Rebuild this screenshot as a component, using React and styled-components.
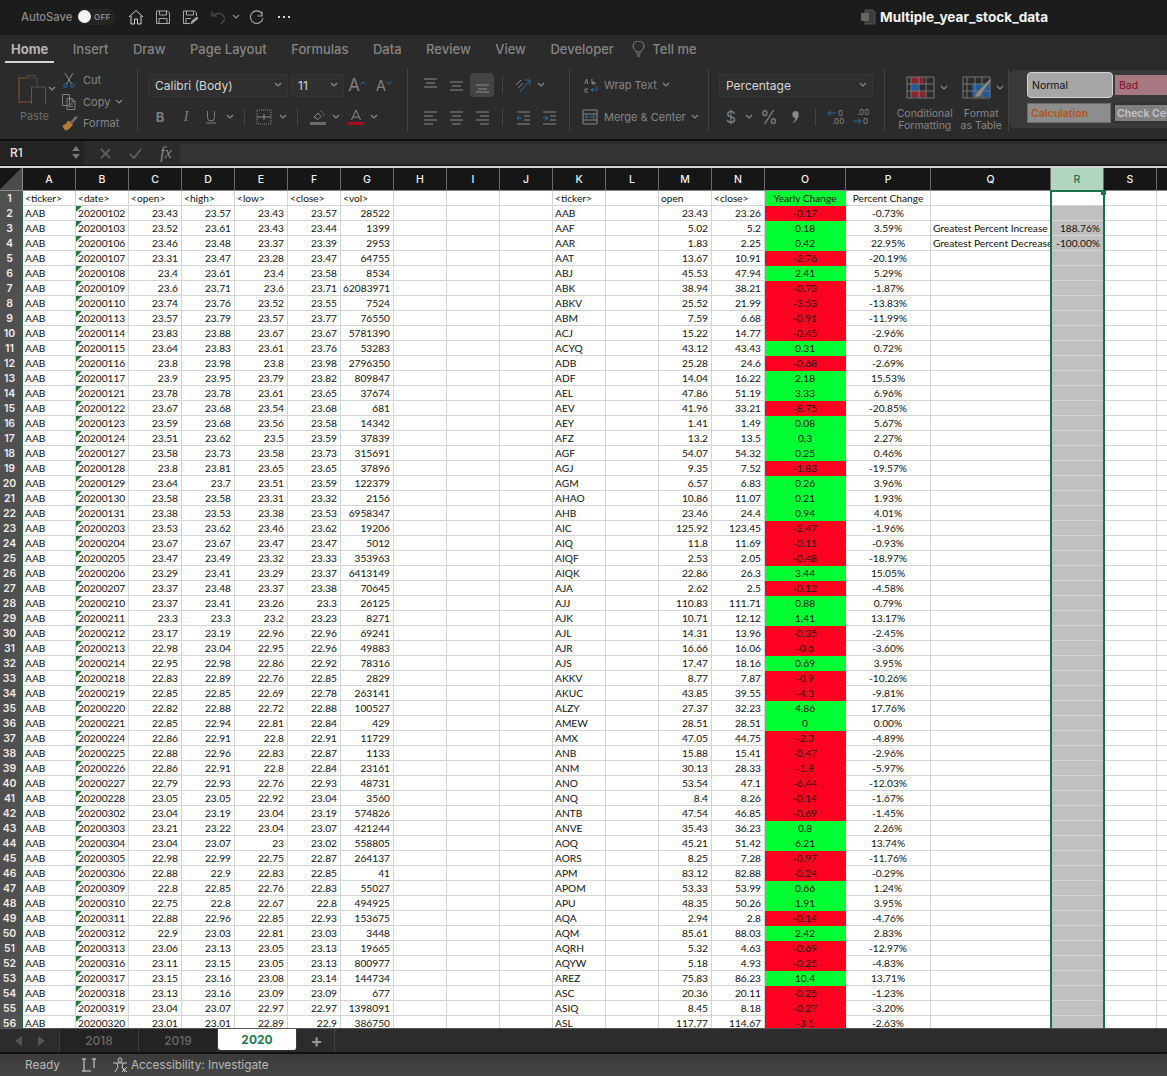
import React from 'react';
import styled, { createGlobalStyle } from 'styled-components';

const GlobalStyle = createGlobalStyle`
    html, body { margin: 0; padding: 0; background: #1c1c1c; }
    * { box-sizing: border-box; }
`;

const DATES = '20200102 20200103 20200106 20200107 20200108 20200109 20200110 20200113 20200114 20200115 20200116 20200117 20200121 20200122 20200123 20200124 20200127 20200128 20200129 20200130 20200131 20200203 20200204 20200205 20200206 20200207 20200210 20200211 20200212 20200213 20200214 20200218 20200219 20200220 20200221 20200224 20200225 20200226 20200227 20200228 20200302 20200303 20200304 20200305 20200306 20200309 20200310 20200311 20200312 20200313 20200316 20200317 20200318 20200319 20200320'.split(' ');

const PRICES = `23.43 23.57 23.43 23.57 28522
23.52 23.61 23.43 23.44 1399
23.46 23.48 23.37 23.39 2953
23.31 23.47 23.28 23.47 64755
23.4 23.61 23.4 23.58 8534
23.6 23.71 23.6 23.71 62083971
23.74 23.76 23.52 23.55 7524
23.57 23.79 23.57 23.77 76550
23.83 23.88 23.67 23.67 5781390
23.64 23.83 23.61 23.76 53283
23.8 23.98 23.8 23.98 2796350
23.9 23.95 23.79 23.82 809847
23.78 23.78 23.61 23.65 37674
23.67 23.68 23.54 23.68 681
23.59 23.68 23.56 23.58 14342
23.51 23.62 23.5 23.59 37839
23.58 23.73 23.58 23.73 315691
23.8 23.81 23.65 23.65 37896
23.64 23.7 23.51 23.59 122379
23.58 23.58 23.31 23.32 2156
23.38 23.53 23.38 23.53 6958347
23.53 23.62 23.46 23.62 19206
23.67 23.67 23.47 23.47 5012
23.47 23.49 23.32 23.33 353963
23.29 23.41 23.29 23.37 6413149
23.37 23.48 23.37 23.38 70645
23.37 23.41 23.26 23.3 26125
23.3 23.3 23.2 23.23 8271
23.17 23.19 22.96 22.96 69241
22.98 23.04 22.95 22.96 49883
22.95 22.98 22.86 22.92 78316
22.83 22.89 22.76 22.85 2829
22.85 22.85 22.69 22.78 263141
22.82 22.88 22.72 22.88 100527
22.85 22.94 22.81 22.84 429
22.86 22.91 22.8 22.91 11729
22.88 22.96 22.83 22.87 1133
22.86 22.91 22.8 22.84 23161
22.79 22.93 22.76 22.93 48731
23.05 23.05 22.92 23.04 3560
23.04 23.19 23.04 23.19 574826
23.21 23.22 23.04 23.07 421244
23.04 23.07 23 23.02 558805
22.98 22.99 22.75 22.87 264137
22.88 22.9 22.83 22.85 41
22.8 22.85 22.76 22.83 55027
22.75 22.8 22.67 22.8 494925
22.88 22.96 22.85 22.93 153675
22.9 23.03 22.81 23.03 3448
23.06 23.13 23.05 23.13 19665
23.11 23.15 23.05 23.13 800977
23.15 23.16 23.08 23.14 144734
23.13 23.16 23.09 23.09 677
23.04 23.07 22.97 22.97 1398091
23.01 23.01 22.89 22.9 386750`.split('\n').map((line) => line.split(' '));

const SUMMARY = `AAB 23.43 23.26 -0.17 -0.73%
AAF 5.02 5.2 0.18 3.59%
AAR 1.83 2.25 0.42 22.95%
AAT 13.67 10.91 -2.76 -20.19%
ABJ 45.53 47.94 2.41 5.29%
ABK 38.94 38.21 -0.73 -1.87%
ABKV 25.52 21.99 -3.53 -13.83%
ABM 7.59 6.68 -0.91 -11.99%
ACJ 15.22 14.77 -0.45 -2.96%
ACYQ 43.12 43.43 0.31 0.72%
ADB 25.28 24.6 -0.68 -2.69%
ADF 14.04 16.22 2.18 15.53%
AEL 47.86 51.19 3.33 6.96%
AEV 41.96 33.21 -8.75 -20.85%
AEY 1.41 1.49 0.08 5.67%
AFZ 13.2 13.5 0.3 2.27%
AGF 54.07 54.32 0.25 0.46%
AGJ 9.35 7.52 -1.83 -19.57%
AGM 6.57 6.83 0.26 3.96%
AHAO 10.86 11.07 0.21 1.93%
AHB 23.46 24.4 0.94 4.01%
AIC 125.92 123.45 -2.47 -1.96%
AIQ 11.8 11.69 -0.11 -0.93%
AIQF 2.53 2.05 -0.48 -18.97%
AIQK 22.86 26.3 3.44 15.05%
AJA 2.62 2.5 -0.12 -4.58%
AJJ 110.83 111.71 0.88 0.79%
AJK 10.71 12.12 1.41 13.17%
AJL 14.31 13.96 -0.35 -2.45%
AJR 16.66 16.06 -0.6 -3.60%
AJS 17.47 18.16 0.69 3.95%
AKKV 8.77 7.87 -0.9 -10.26%
AKUC 43.85 39.55 -4.3 -9.81%
ALZY 27.37 32.23 4.86 17.76%
AMEW 28.51 28.51 0 0.00%
AMX 47.05 44.75 -2.3 -4.89%
ANB 15.88 15.41 -0.47 -2.96%
ANM 30.13 28.33 -1.8 -5.97%
ANO 53.54 47.1 -6.44 -12.03%
ANQ 8.4 8.26 -0.14 -1.67%
ANTB 47.54 46.85 -0.69 -1.45%
ANVE 35.43 36.23 0.8 2.26%
AOQ 45.21 51.42 6.21 13.74%
AORS 8.25 7.28 -0.97 -11.76%
APM 83.12 82.88 -0.24 -0.29%
APOM 53.33 53.99 0.66 1.24%
APU 48.35 50.26 1.91 3.95%
AQA 2.94 2.8 -0.14 -4.76%
AQM 85.61 88.03 2.42 2.83%
AQRH 5.32 4.63 -0.69 -12.97%
AQYW 5.18 4.93 -0.25 -4.83%
AREZ 75.83 86.23 10.4 13.71%
ASC 20.36 20.11 -0.25 -1.23%
ASIQ 8.45 8.18 -0.27 -3.20%
ASL 117.77 114.67 -3.1 -2.63%`.split('\n').map((line) => line.split(' '));

const COLUMNS = 'ABCDEFGHIJKLMNOPQRST'.split('');
const HEAD_ROW = {
    A: '<ticker>', B: '<date>', C: '<open>', D: '<high>', E: '<low>', F: '<close>', G: '<vol>',
    K: '<ticker>', M: 'open', N: '<close>', O: 'Yearly Change', P: 'Percent Change',
};
const UI_FONT = `Inter, "Liberation Sans", sans-serif`;
const GREEN = '#1d6f48';

const Page = styled.div`
    width: 1167px;
    height: 1076px;
    display: flex;
    flex-direction: column;
    overflow: hidden;
    font-family: ${UI_FONT};
    background: #2b2b2b;
`;

/* title bar */
const TitleBar = styled.div`
    height: 35px;
    flex: none;
    display: flex;
    align-items: center;
    padding: 0 0 2px 21px;
    background: #1c1c1c;
`;
const AutoSave = styled.span`
    width: 56px;
    font-size: 11.2px;
    font-weight: 500;
    color: #8c8c8c;
`;
const Toggle = styled.span`
    width: 39px;
    height: 16px;
    border-radius: 8px;
    background: #242424;
    display: flex;
    align-items: center;
    gap: 3px;
    margin-right: 6.5px;
    padding-left: 1px;
    font-size: 8px;
    font-weight: 600;
    letter-spacing: 0.3px;
    color: #8c8c8c;
    &::before {
        content: '';
        width: 13px;
        height: 13px;
        border-radius: 50%;
        background: #f2f2f2;
    }
`;
const Quick = styled.span`
    width: ${(p) => p.$w}px;
    display: flex;
    justify-content: center;
    align-items: center;
    flex: none;
`;
const DocTitle = styled.div`
    margin-left: auto;
    width: 307px;
    display: flex;
    align-items: center;
    gap: 4px;
    font-size: 13.6px;
    font-weight: 700;
    color: #f4f4f4;
`;

/* ribbon tabs */
const TabsBar = styled.div`
    height: 31px;
    flex: none;
    display: flex;
    align-items: center;
    gap: 24.5px;
    padding: 0 0 3px 11px;
    background: #2b2b2b;
`;
const RibbonTab = styled.span`
    position: relative;
    display: flex;
    align-items: center;
    gap: 7px;
    margin-left: ${(p) => p.$shift || 0}px;
    font-size: 13px;
    font-weight: ${(p) => (p.$active ? 700 : 500)};
    color: ${(p) => (p.$active ? '#b4b4b4' : '#858585')};
    ${(p) => p.$active && `
        &::after {
            content: '';
            position: absolute;
            left: -6px;
            right: -6px;
            bottom: -6px;
            height: 2px;
            background: #d4d4d4;
        }
    `}
`;

/* ribbon */
const Ribbon = styled.div`
    height: 73px;
    flex: none;
    display: flex;
    padding-top: 3px;
    background: #2b2b2b;
    overflow: hidden;
`;
const Group = styled.div`
    width: ${(p) => p.$w}px;
    height: 62px;
    flex: none;
    display: flex;
    flex-direction: ${(p) => (p.$row ? 'row' : 'column')};
    gap: ${(p) => (p.$row ? 0 : 8)}px;
    padding: ${(p) => (p.$row ? '0' : '4px 0 0')};
    padding-left: ${(p) => p.$pad || 0}px;
    border-right: 1px solid #444;
`;
const ToolRow = styled.div`
    height: 24px;
    display: flex;
    align-items: center;
`;
const Slot = styled.span`
    width: ${(p) => p.$w}px;
    height: 24px;
    flex: none;
    display: flex;
    align-items: center;
    justify-content: center;
    border-radius: 4px;
    font-family: ${(p) => (p.$serif ? '"Liberation Serif", serif' : UI_FONT)};
    font-size: ${(p) => p.$size || 14}px;
    font-weight: ${(p) => p.$weight || 400};
    font-style: ${(p) => (p.$italic ? 'italic' : 'normal')};
    color: #7f7f7f;
    background: ${(p) => (p.$active ? '#444' : 'transparent')};
`;
const Divider = styled.span`
    width: 1px;
    height: 18px;
    background: #444;
`;
const Select = styled.div`
    width: ${(p) => p.$w}px;
    height: 23px;
    flex: none;
    margin-right: ${(p) => p.$gap || 0}px;
    padding: 0 5px 0 6px;
    display: flex;
    align-items: center;
    justify-content: space-between;
    font-size: 12px;
    color: #d6d6d6;
    background: #2f2f2f;
    border: 1px solid #363636;
    border-radius: 3px;
`;
const ClipLabel = styled.span`
    padding-left: 3px;
    font-size: 11px;
    color: #6d6d6d;
`;
const PasteColumn = styled.div`
    width: 60px;
    padding: 5px 0 0 17px;
    display: flex;
    flex-direction: column;
    gap: 5px;
`;
const PasteTop = styled.div`
    display: flex;
    align-items: center;
    gap: 2px;
`;
const ClipList = styled.div`
    display: flex;
    flex-direction: column;
    padding-top: 3px;
    gap: 4px;
`;
const ClipRow = styled.div`
    height: 18px;
    display: flex;
    align-items: center;
    gap: 5px;
    font-size: 11px;
    color: #868686;
`;
const ClipIcon = styled.span`
    width: 18px;
    display: flex;
    justify-content: center;
`;
const TextTool = styled.span`
    margin-left: 2px;
    margin-right: 5px;
    font-size: 11px;
    color: #868686;
`;
const StyleColumn = styled.div`
    width: ${(p) => p.$w}px;
    display: flex;
    flex-direction: column;
    padding-top: 7px;
    gap: 9px;
`;
const StyleIconRow = styled.div`
    height: 23px;
    display: flex;
    align-items: center;
    gap: ${(p) => p.$gap}px;
    padding-left: ${(p) => p.$pad}px;
`;
const StyleLabel = styled.div`
    font-size: 10.5px;
    line-height: 12px;
    text-align: center;
    color: #868686;
`;
const StyleBox = styled.div`
    flex: 1;
    height: 58px;
    margin-top: 1px;
    padding: 2px 0 0 18px;
    display: flex;
    flex-direction: column;
    gap: 5px;
    background: #3a3a3a;
    border-radius: 6px 0 0 6px;
`;
const StyleLine = styled.div`
    display: flex;
    align-items: center;
    height: ${(p) => p.$h}px;
    gap: 2px;
`;
const StyleChip = styled.span`
    width: ${(p) => p.$w}px;
    height: ${(p) => p.$h}px;
    flex: none;
    display: flex;
    align-items: center;
    padding-left: ${(p) => p.$pad || 4}px;
    font-size: 10.5px;
    font-weight: ${(p) => p.$weight || 400};
    color: ${(p) => p.$color};
    background: ${(p) => p.$bg};
    border: ${(p) => p.$border || 'none'};
    border-radius: ${(p) => p.$radius || 0}px;
    overflow: hidden;
    white-space: nowrap;
`;

/* formula bar */
const FormulaBar = styled.div`
    height: 27px;
    flex: none;
    display: flex;
    align-items: stretch;
    background: #2b2b2b;
    border-top: 2px solid #0c0c0c;
    border-bottom: 1px solid #111;
`;
const NameBox = styled.div`
    width: 84px;
    flex: none;
    padding: 0 4px 2px 10px;
    display: flex;
    align-items: center;
    justify-content: space-between;
    font-size: 12px;
    font-weight: 500;
    color: #e4e4e4;
    background: #232323;
`;
const Stepper = styled.span`
    display: flex;
    flex-direction: column;
    gap: 3px;
`;
const FormulaTools = styled.div`
    width: 96px;
    flex: none;
    display: flex;
    align-items: center;
`;
const FxLabel = styled.span`
    width: 36px;
    padding-left: 8px;
    text-align: center;
    font-family: "Liberation Serif", serif;
    font-style: italic;
    font-size: 16px;
    color: #8a8a8a;
`;
const FormulaInput = styled.div`
    flex: 1;
    margin: 3px 0 2px;
    background: #333;
    border-radius: 2px 0 0 2px;
`;

/* worksheet */
const SheetWrap = styled.div`
    position: relative;
    flex: 1;
    min-height: 0;
    overflow: hidden;
    background: #fff;
    border-top: 2px solid #d4d4d4;
`;
const Sheet = styled.div`
    display: grid;
    grid-template-columns: 23px repeat(14, 53px) 81px 85px 120px 53px 53px 53px;
    grid-template-rows: 23px;
    grid-auto-rows: 15px;
    width: 1210px;
`;
const Corner = styled.div`
    background: linear-gradient(135deg, #161616 50%, #4c4c4c 50%);
    border-right: 1px solid #8a8a8a;
    border-bottom: 1px solid #8a8a8a;
`;
const ColHead = styled.div`
    display: flex;
    align-items: center;
    justify-content: center;
    font-size: 10.5px;
    font-weight: 500;
    color: ${(p) => (p.$selected ? GREEN : '#f2f2f2')};
    background: ${(p) => (p.$selected ? '#b1d6c0' : '#161616')};
    border-right: 1px solid #6a6a6a;
    border-bottom: 1px solid #8a8a8a;
`;
const RowHead = styled.div`
    display: flex;
    align-items: center;
    justify-content: center;
    padding-right: 2px;
    font-size: 10.5px;
    font-weight: 600;
    color: #ececec;
    background: #505050;
    border-right: 2px solid ${GREEN};
    line-height: 15px;
`;
const Cell = styled.div`
    position: relative;
    padding: 0 ${(p) => (p.$align === 'right' ? 3 : 2)}px 0 2px;
    font-family: Lato, "Liberation Sans", sans-serif;
    font-size: 10.2px;
    line-height: 14px;
    white-space: nowrap;
    overflow: hidden;
    text-align: ${(p) => p.$align || 'left'};
    color: #111;
    background: ${(p) => p.$bg || '#fff'};
    border-right: 1px solid ${(p) => (p.$bg ? p.$bg : '#d4d4d4')};
    border-bottom: 1px solid ${(p) => (p.$bg && p.$bg !== '#c0c0c0' ? p.$bg : '#d4d4d4')};
    ${(p) => p.$flag && `
        &::before {
            content: '';
            position: absolute;
            left: 0;
            top: 0;
            border-top: 6px solid #1f7a3d;
            border-right: 6px solid transparent;
        }
    `}
`;
const ColumnSelection = styled.div`
    position: absolute;
    left: 1050px;
    top: 22px;
    bottom: 0;
    width: 55px;
    border: 2px solid ${GREEN};
    border-bottom: 0;
    pointer-events: none;
    &::after {
        content: '';
        position: absolute;
        right: -3px;
        top: -2px;
        width: 5px;
        height: 5px;
        background: ${GREEN};
    }
`;

/* sheet tabs + status */
const SheetTabs = styled.div`
    height: 26px;
    flex: none;
    display: flex;
    background: #2c2c2c;
    border-top: 1px solid #555;
    border-bottom: 2px solid #111;
`;
const TabNav = styled.div`
    width: 60px;
    flex: none;
    display: flex;
    align-items: center;
    justify-content: center;
    gap: 16px;
    border-right: 1px solid #3c3c3c;
`;
const NavArrow = styled.span`
    width: 0;
    height: 0;
    border-top: 5px solid transparent;
    border-bottom: 5px solid transparent;
    ${(p) => (p.$left ? 'border-right: 7px solid #555;' : 'border-left: 7px solid #555;')}
`;
const SheetTab = styled.div`
    width: 79px;
    flex: none;
    margin-bottom: ${(p) => (p.$active ? 2 : 0)}px;
    display: flex;
    align-items: center;
    justify-content: center;
    font-size: 12px;
    font-weight: ${(p) => (p.$active ? 700 : 500)};
    color: ${(p) => (p.$active ? '#1f7a4d' : '#6a6a6a')};
    background: ${(p) => (p.$active ? '#fff' : '#232323')};
    border-right: 1px solid #3c3c3c;
    border-radius: ${(p) => (p.$active ? '0 0 3px 3px' : '0')};
`;
const AddTab = styled.div`
    width: 38px;
    flex: none;
    padding-left: 2px;
    display: flex;
    align-items: center;
    justify-content: center;
    font-size: 18px;
    font-weight: 600;
    color: #999;
    border-right: 1px solid #444;
`;
const StatusBar = styled.div`
    height: 22px;
    flex: none;
    display: flex;
    align-items: center;
    padding-left: 25px;
    font-size: 11.8px;
    color: #b8b8b8;
    background: linear-gradient(#3a3a3a, #454545);
`;
const StatusIcon = styled.span`
    display: flex;
    margin: ${(p) => p.$margin};
`;

const Ic = ({ w = 16, h = 16, box, children, stroke = '#8a8a8a', sw = 1 }) => (
    <svg width={w} height={h} viewBox={box || `0 0 ${w} ${h}`} fill="none" stroke={stroke} strokeWidth={sw}>
        {children}
    </svg>
);

const Chevron = ({ color = '#8a8a8a' }) => (
    <Ic w={8} h={6} stroke={color} sw={1.2}><path d="M1 1l3 3 3-3" /></Ic>
);

const Lines = ({ rows, color = '#8c8c8c' }) => (
    <Ic w={15} h={15} stroke={color}>
        {rows.map(([x1, x2, y]) => <path key={y} d={`M${x1} ${y}H${x2}`} />)}
    </Ic>
);

const TextDoc = () => (
    <Ic w={18} h={18} stroke="#808080">
        <path d="M2.5 1.5h7v11h-7zM7 5.5h5l3 3v8H7z" />
        <path d="M12 5.5v3h3M9 11h4M9 13.5h4" />
    </Ic>
);

function TitleTools() {
    return (
        <>
            <Quick $w={27}>
                <Ic stroke="#d4d4d4"><path d="M1 8l7-6.5L15 8M3 7v8h3.5v-5h3v5H13V7" /></Ic>
            </Quick>
            <Quick $w={27}>
                <Ic stroke="#a8a8a8"><path d="M1.5 2h11l2 2v10.5h-13zM4.5 2v4h7V2M4 14.5V9.5h8v5" /></Ic>
            </Quick>
            <Quick $w={27}>
                <Ic stroke="#a8a8a8">
                    <path d="M8 14.5H1.5V2h11l2 2v3M4.5 2v4h7V2M4 14V9.5h5" />
                    <path d="M9 15l1-3 5-4 1 1.5-5 4z" fill="#a8a8a8" />
                </Ic>
            </Quick>
            <Quick $w={28}>
                <Ic stroke="#4e4e4e" sw={1.2}><path d="M2 2v5h5M2.5 7C6 3 12 3.5 14 8c1 3-1 5.5-3.5 7" /></Ic>
            </Quick>
            <Quick $w={9}><Chevron /></Quick>
            <Quick $w={33}>
                <Ic stroke="#a8a8a8" sw={1.1}><path d="M13 2.5v4.5H8.5M14 9a6.3 6.3 0 1 1-1.5-5L13 7" /></Ic>
            </Quick>
            <Quick $w={21}>
                <Ic w={14} h={4} stroke="none"><path d="M1 1h2v2H1zM6 1h2v2H6zM11 1h2v2h-2z" fill="#d8d8d8" /></Ic>
            </Quick>
        </>
    );
}

function ClipboardGroup() {
    return (
        <Group $w={138} $row>
            <PasteColumn>
                <PasteTop>
                    <Ic w={29} h={30} stroke="#5a4030" sw={2}>
                        <path d="M8 4H2v24h12" />
                        <path d="M8 4h12v8M10 4V1.5h8V4" stroke="#4c4c4c" strokeWidth="1" />
                        <path d="M14.5 13h14v18h-14z" stroke="#585858" strokeWidth="1" />
                    </Ic>
                    <Chevron />
                </PasteTop>
                <ClipLabel>Paste</ClipLabel>
            </PasteColumn>
            <ClipList>
                <ClipRow>
                    <ClipIcon>
                        <Ic w={14} h={16} stroke="#8a8a8a">
                            <path d="M3 1l6.5 11M11 1L4.5 12" />
                            <circle cx="3.5" cy="13.5" r="1.8" stroke="#2e6da4" />
                            <circle cx="10.5" cy="13.5" r="1.8" stroke="#2e6da4" />
                        </Ic>
                    </ClipIcon>
                    Cut
                </ClipRow>
                <ClipRow>
                    <ClipIcon><TextDoc /></ClipIcon>
                    Copy
                    <Chevron />
                </ClipRow>
                <ClipRow>
                    <ClipIcon>
                        <Ic w={17} h={16} stroke="#a0a0a0">
                            <path d="M10 7l5-5.5 1 1-5 5.5" />
                            <path d="M2 11c3-1 4-3 5.5-5l4 3.5c-2 3-5 5.5-7 5.5z" fill="#b07a34" stroke="#c08a40" />
                        </Ic>
                    </ClipIcon>
                    Format
                </ClipRow>
            </ClipList>
        </Group>
    );
}

function FontGroup() {
    return (
        <Group $w={270} $pad={10}>
            <ToolRow>
                <Select $w={140} $gap={3}>Calibri (Body)<Chevron /></Select>
                <Select $w={53}>11<Chevron /></Select>
                <Slot $w={26} $size={17}>
                    A<Ic w={6} h={8} stroke="#2e6da4"><path d="M0.5 3.5L3 1l2.5 2.5" /></Ic>
                </Slot>
                <Slot $w={28} $size={15}>
                    A<Ic w={6} h={8} stroke="#2e6da4"><path d="M0.5 0.5L3 3l2.5-2.5" /></Ic>
                </Slot>
            </ToolRow>
            <ToolRow>
                <Slot $w={24} $size={13} $weight={700}>B</Slot>
                <Slot $w={28} $size={14} $italic $serif>I</Slot>
                <Slot $w={22} $size={12}>
                    <Ic w={10} h={14} stroke="#7f7f7f"><path d="M1.5 1v6.5a3.5 3.5 0 0 0 7 0V1M0 13h10" /></Ic>
                </Slot>
                <Slot $w={16}><Chevron /></Slot>
                <Slot $w={12}><Divider /></Slot>
                <Slot $w={28}>
                    <Ic stroke="#8a8a8a">
                        <path d="M1 1h14v14H1z" strokeDasharray="1 1" />
                        <path d="M1 8h14M8 5v6" />
                    </Ic>
                </Slot>
                <Slot $w={10}><Chevron /></Slot>
                <Slot $w={18}><Divider /></Slot>
                <Slot $w={24}>
                    <Ic h={16} stroke="#8a8a8a">
                        <path d="M4 8l4-4 3 3.5-3 3z" />
                        <path d="M10 2c2 0 4 2 4 5" stroke="#2e6da4" />
                        <path d="M0 13h16v3H0z" fill="#6a6a6a" stroke="none" />
                    </Ic>
                </Slot>
                <Slot $w={12}><Chevron /></Slot>
                <Slot $w={28}>
                    <Ic stroke="#8a8a8a">
                        <path d="M3.5 11L8 1l4.5 10M5 8h6" />
                        <path d="M0 13h16v3H0z" fill="#a80d1c" stroke="none" />
                    </Ic>
                </Slot>
                <Slot $w={8}><Chevron /></Slot>
            </ToolRow>
        </Group>
    );
}

function AlignGroup() {
    return (
        <Group $w={162} $pad={10}>
            <ToolRow>
                <Slot $w={24}><Lines rows={[[1, 14, 1], [3, 12, 5], [1, 14, 9]]} /></Slot>
                <Slot $w={28}><Lines rows={[[1, 14, 4], [3, 12, 8], [1, 14, 12]]} /></Slot>
                <Slot $w={24} $active><Lines rows={[[1, 14, 7], [3, 12, 11], [1, 14, 14]]} /></Slot>
                <Slot $w={16}><Divider /></Slot>
                <Slot $w={26}>
                    <Ic w={17} h={16} stroke="#8a8a8a">
                        <path d="M1 8l5-5M3 11l5-5" />
                        <path d="M5 15L15 3M10 3h5v5" stroke="#2e6da4" />
                    </Ic>
                </Slot>
                <Slot $w={10}><Chevron /></Slot>
            </ToolRow>
            <ToolRow>
                <Slot $w={24}><Lines rows={[[1, 14, 2], [1, 10, 6], [1, 14, 10], [1, 10, 14]]} /></Slot>
                <Slot $w={28}><Lines rows={[[1, 14, 2], [3, 12, 6], [1, 14, 10], [3, 12, 14]]} /></Slot>
                <Slot $w={24}><Lines rows={[[1, 14, 2], [5, 14, 6], [1, 14, 10], [5, 14, 14]]} /></Slot>
                <Slot $w={16}><Divider /></Slot>
                <Slot $w={26}>
                    <Ic w={15} h={15} stroke="#8a8a8a">
                        <path d="M1 2h13M8 6h6M8 10h6M1 14h13" />
                        <path d="M6 8H1M3.5 5.5L1 8l2.5 2.5" stroke="#2e6da4" />
                    </Ic>
                </Slot>
                <Slot $w={26}>
                    <Ic w={15} h={15} stroke="#8a8a8a">
                        <path d="M1 2h13M8 6h6M8 10h6M1 14h13" />
                        <path d="M1 8h5M3.5 5.5L6 8l-2.5 2.5" stroke="#2e6da4" />
                    </Ic>
                </Slot>
            </ToolRow>
        </Group>
    );
}

function WrapGroup() {
    return (
        <Group $w={139} $pad={8}>
            <ToolRow>
                <Slot $w={24}>
                    <Ic w={15} h={15} stroke="#8a8a8a">
                        <path d="M2 6l1.5-5L5 6M9 1v5M9 4.5h3v1.5H9M5 14H2v-3h3" />
                        <path d="M14 8v4H8M10 10l-2 2 2 2" stroke="#2e6da4" />
                    </Ic>
                </Slot>
                <TextTool>Wrap Text</TextTool>
                <Chevron />
            </ToolRow>
            <ToolRow>
                <Slot $w={24}>
                    <Ic stroke="#8a8a8a">
                        <path d="M1 1h14v4H1zM1 11h14v4H1zM1 5v6M15 5v6" />
                        <path d="M3 8h10M5 6l-2 2 2 2M11 6l2 2-2 2" stroke="#2e6da4" />
                    </Ic>
                </Slot>
                <TextTool>Merge &amp; Center</TextTool>
                <Chevron />
            </ToolRow>
        </Group>
    );
}

function NumberGroup() {
    const small = { fontSize: 8, fill: '#8a8a8a', stroke: 'none', fontFamily: 'Inter, sans-serif' };
    return (
        <Group $w={176} $pad={10}>
            <ToolRow>
                <Select $w={154}>Percentage<Chevron /></Select>
            </ToolRow>
            <ToolRow>
                <Slot $w={24} $size={16}>$</Slot>
                <Slot $w={12}><Chevron /></Slot>
                <Slot $w={28} $size={18}>%</Slot>
                <Slot $w={24}>
                    <Ic w={7} h={12} stroke="none">
                        <path d="M3.5 0C6 0 7 2 6.6 4.5 6.2 7.5 4 10.5 1.5 12L1 11.3c1.500-1.300 2.300-2.800 2.500-4.300C1.500 7 0.300 5.500 0.300 3.600 0.300 1.500 1.700 0 3.500 0z" fill="#8a8a8a" />
                    </Ic>
                </Slot>
                <Slot $w={16}><Divider /></Slot>
                <Slot $w={28}>
                    <Ic w={20} h={18} stroke="#2e6da4">
                        <path d="M9 5H1M3.500 2.500L1 5l2.500 2.500" />
                        <text x="11" y="8" style={small}>0</text>
                        <text x="5" y="16" style={small}>.00</text>
                    </Ic>
                </Slot>
                <Slot $w={22}>
                    <Ic w={20} h={18} stroke="#2e6da4">
                        <path d="M1 13h8M6.500 10.500L9 13l-2.500 2.500" />
                        <text x="5" y="7" style={small}>.00</text>
                        <text x="11" y="16" style={small}>0</text>
                    </Ic>
                </Slot>
            </ToolRow>
        </Group>
    );
}

function TableIcon({ brush }) {
    return (
        <Ic w={29} h={23} stroke="#777">
            {brush ? (
                <path d="M10 8h18v13H10z" fill="#1f5a9c" stroke="none" />
            ) : (
                <>
                    <path d="M5 1h13v7H5zM5 15h15v6H5z" fill="#8a2430" stroke="none" />
                    <path d="M5 8h8v7H5z" fill="#1f5a9c" stroke="none" />
                </>
            )}
            <path d="M1 1h27v21H1zM1 8h27M1 15h27M5 1v21M13 1v21M20 1v21" />
            {brush && <path d="M29 2L17 14c-2 1-4 4-5 7 4 1 8-1 8-4L29 5z" fill="#8a8a8a" stroke="#555" />}
        </Ic>
    );
}

function StylesGroup() {
    return (
        <Group $w={124} $row $pad={10}>
            <StyleColumn $w={60}>
                <StyleIconRow $pad={11} $gap={5}><TableIcon /><Chevron /></StyleIconRow>
                <StyleLabel>Conditional<br />Formatting</StyleLabel>
            </StyleColumn>
            <StyleColumn $w={54}>
                <StyleIconRow $pad={8} $gap={5}><TableIcon brush /><Chevron /></StyleIconRow>
                <StyleLabel>Format<br />as Table</StyleLabel>
            </StyleColumn>
        </Group>
    );
}

function CellStyles() {
    return (
        <StyleBox>
            <StyleLine $h={26}>
                <StyleChip $w={86} $h={26} $color="#111" $bg="#a6a6a6" $border="1px solid #d4d4d4" $radius={4}>Normal</StyleChip>
                <StyleChip $w={60} $h={20} $color="#7c1020" $bg="#a87880">Bad</StyleChip>
            </StyleLine>
            <StyleLine $h={20}>
                <StyleChip $w={84} $h={20} $pad={3} $weight={600} $color="#b9540f" $bg="#8d8d8d" $border="1px solid #6c6c6c">Calculation</StyleChip>
                <StyleChip $w={60} $h={20} $pad={2} $weight={600} $color="#c4c4c4" $bg="#808080" $border="2px solid #333">Check Cell</StyleChip>
            </StyleLine>
        </StyleBox>
    );
}

function Worksheet() {
    const cellFor = (col, row) => {
        if (row === 1) {
            if (col === 'O') return <Cell key={col} $align="center" $bg="#00ff33">{HEAD_ROW.O}</Cell>;
            if (col === 'P') return <Cell key={col} $align="center">{HEAD_ROW.P}</Cell>;
            return <Cell key={col}>{HEAD_ROW[col] || ''}</Cell>;
        }
        const left = PRICES[row - 2];
        const right = SUMMARY[row - 2];
        switch (col) {
            case 'A': return <Cell key={col}>AAB</Cell>;
            case 'B': return <Cell key={col} $flag>{DATES[row - 2]}</Cell>;
            case 'C': case 'D': case 'E': case 'F': case 'G':
                return <Cell key={col} $align="right">{left['CDEFG'.indexOf(col)]}</Cell>;
            case 'K': return <Cell key={col}>{right[0]}</Cell>;
            case 'M': return <Cell key={col} $align="right">{right[1]}</Cell>;
            case 'N': return <Cell key={col} $align="right">{right[2]}</Cell>;
            case 'O':
                return <Cell key={col} $align="center" $bg={right[3].startsWith('-') ? '#ff0020' : '#00ff33'}>{right[3]}</Cell>;
            case 'P': return <Cell key={col} $align="center">{right[4]}</Cell>;
            case 'Q':
                if (row === 3) return <Cell key={col}>Greatest Percent Increase</Cell>;
                if (row === 4) return <Cell key={col}>Greatest Percent Decrease</Cell>;
                return <Cell key={col} />;
            case 'R':
                return (
                    <Cell key={col} $align="right" $bg="#c0c0c0">
                        {row === 3 ? '188.76%' : row === 4 ? '-100.00%' : ''}
                    </Cell>
                );
            default: return <Cell key={col} />;
        }
    };

    const rows = [];
    for (let row = 1; row <= 56; row += 1) {
        rows.push(
            <React.Fragment key={row}>
                <RowHead>{row}</RowHead>
                {COLUMNS.map((col) => cellFor(col, row))}
            </React.Fragment>
        );
    }

    return (
        <SheetWrap>
            <Sheet>
                <Corner />
                {COLUMNS.map((col) => <ColHead key={col} $selected={col === 'R'}>{col}</ColHead>)}
                {rows}
            </Sheet>
            <ColumnSelection />
        </SheetWrap>
    );
}

export default function App() {
    return (
        <Page>
            <GlobalStyle />
            <TitleBar>
                <AutoSave>AutoSave</AutoSave>
                <Toggle>OFF</Toggle>
                <TitleTools />
                <DocTitle>
                    <Ic stroke="#555">
                        <path d="M5 1h8l2 2v12H5z" fill="#3d3d3d" />
                        <path d="M1 4h8v8H1z" fill="#666" stroke="none" />
                    </Ic>
                    Multiple_year_stock_data
                </DocTitle>
            </TitleBar>
            <TabsBar>
                <RibbonTab $active>Home</RibbonTab>
                <RibbonTab>Insert</RibbonTab>
                <RibbonTab>Draw</RibbonTab>
                <RibbonTab>Page Layout</RibbonTab>
                <RibbonTab>Formulas</RibbonTab>
                <RibbonTab>Data</RibbonTab>
                <RibbonTab>Review</RibbonTab>
                <RibbonTab>View</RibbonTab>
                <RibbonTab>Developer</RibbonTab>
                <RibbonTab $shift={-6}>
                    <Ic w={13} h={16} stroke="#858585">
                        <path d="M4 11c0-2-3-3-3-6a5.5 5 0 0 1 11 0c0 3-3 4-3 6zM4.5 13h4M5 15h3" />
                    </Ic>
                    Tell me
                </RibbonTab>
            </TabsBar>
            <Ribbon>
                <ClipboardGroup />
                <FontGroup />
                <AlignGroup />
                <WrapGroup />
                <NumberGroup />
                <StylesGroup />
                <CellStyles />
            </Ribbon>
            <FormulaBar>
                <NameBox>
                    R1
                    <Stepper>
                        <Ic w={8} h={5} stroke="none"><path d="M4 0l4 5H0z" fill="#777" /></Ic>
                        <Ic w={8} h={5} stroke="none"><path d="M4 5L0 0h8z" fill="#777" /></Ic>
                    </Stepper>
                </NameBox>
                <FormulaTools>
                    <Slot $w={42}><Ic w={11} h={11} stroke="#5c5c5c" sw={2}><path d="M1 1l9 9M10 1l-9 9" /></Ic></Slot>
                    <Slot $w={18}><Ic w={13} h={11} stroke="#5c5c5c" sw={2}><path d="M1 6l4 4 7-9" /></Ic></Slot>
                    <FxLabel>fx</FxLabel>
                </FormulaTools>
                <FormulaInput />
            </FormulaBar>
            <Worksheet />
            <SheetTabs>
                <TabNav>
                    <NavArrow $left />
                    <NavArrow />
                </TabNav>
                <SheetTab>2018</SheetTab>
                <SheetTab>2019</SheetTab>
                <SheetTab $active>2020</SheetTab>
                <AddTab>+</AddTab>
            </SheetTabs>
            <StatusBar>
                Ready
                <StatusIcon $margin="0 15px 0 21px">
                    <Ic stroke="#e0e0e0">
                        <path d="M1 2h4M3 2v12M1 14h9M11 2h4M13 2v9" />
                    </Ic>
                </StatusIcon>
                <StatusIcon $margin="0 3px 0 0">
                    <Ic stroke="#c8c8c8">
                        <circle cx="8" cy="3" r="2" />
                        <path d="M1 6h14M5 6l1 4-3 5M11 6l-1 4 3 5M10 10l5 5M15 10l-5 5" />
                    </Ic>
                </StatusIcon>
                Accessibility: Investigate
            </StatusBar>
        </Page>
    );
}
